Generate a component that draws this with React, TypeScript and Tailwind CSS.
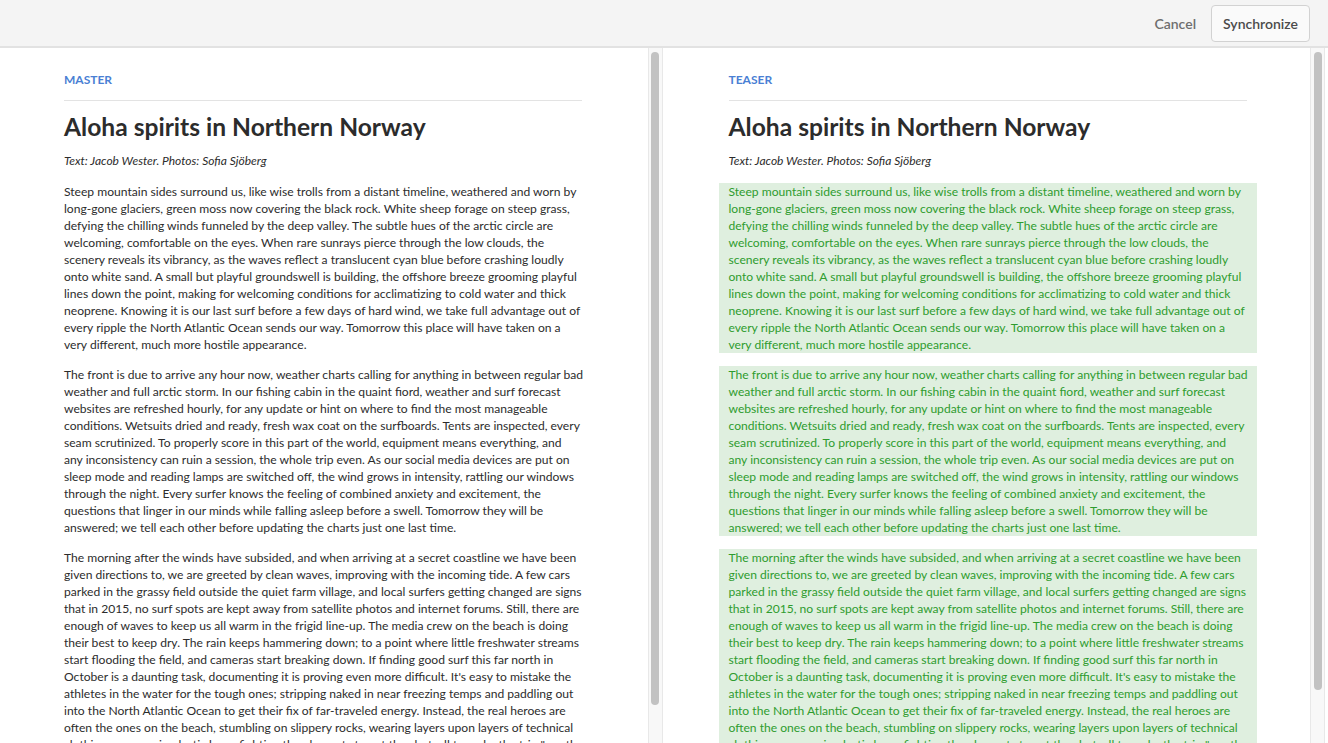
const paragraphs: string[][] = [
  [
    'Steep mountain sides surround us, like wise trolls from a distant timeline, weathered and worn by',
    'long-gone glaciers, green moss now covering the black rock. White sheep forage on steep grass,',
    'defying the chilling winds funneled by the deep valley. The subtle hues of the arctic circle are',
    'welcoming, comfortable on the eyes. When rare sunrays pierce through the low clouds, the',
    'scenery reveals its vibrancy, as the waves reflect a translucent cyan blue before crashing loudly',
    'onto white sand. A small but playful groundswell is building, the offshore breeze grooming playful',
    'lines down the point, making for welcoming conditions for acclimatizing to cold water and thick',
    'neoprene. Knowing it is our last surf before a few days of hard wind, we take full advantage out of',
    'every ripple the North Atlantic Ocean sends our way. Tomorrow this place will have taken on a',
    'very different, much more hostile appearance.',
  ],
  [
    'The front is due to arrive any hour now, weather charts calling for anything in between regular bad',
    'weather and full arctic storm. In our fishing cabin in the quaint fiord, weather and surf forecast',
    'websites are refreshed hourly, for any update or hint on where to find the most manageable',
    'conditions. Wetsuits dried and ready, fresh wax coat on the surfboards. Tents are inspected, every',
    'seam scrutinized. To properly score in this part of the world, equipment means everything, and',
    'any inconsistency can ruin a session, the whole trip even. As our social media devices are put on',
    'sleep mode and reading lamps are switched off, the wind grows in intensity, rattling our windows',
    'through the night. Every surfer knows the feeling of combined anxiety and excitement, the',
    'questions that linger in our minds while falling asleep before a swell. Tomorrow they will be',
    'answered; we tell each other before updating the charts just one last time.',
  ],
  [
    'The morning after the winds have subsided, and when arriving at a secret coastline we have been',
    'given directions to, we are greeted by clean waves, improving with the incoming tide. A few cars',
    'parked in the grassy field outside the quiet farm village, and local surfers getting changed are signs',
    'that in 2015, no surf spots are kept away from satellite photos and internet forums. Still, there are',
    'enough of waves to keep us all warm in the frigid line-up. The media crew on the beach is doing',
    'their best to keep dry. The rain keeps hammering down; to a point where little freshwater streams',
    'start flooding the field, and cameras start breaking down. If finding good surf this far north in',
    "October is a daunting task, documenting it is proving even more difficult. It's easy to mistake the",
    'athletes in the water for the tough ones; stripping naked in near freezing temps and paddling out',
    'into the North Atlantic Ocean to get their fix of far-traveled energy. Instead, the real heroes are',
    'often the ones on the beach, stumbling on slippery rocks, wearing layers upon layers of technical',
    'clothing, cameras in plastic bags, fighting the elements to get the shot, all to make the trip "worth',
    'it".',
  ],
]

interface PaneProps {
  label: string
  highlight?: boolean
  padLeft: string
  thumbEnd: string
}

function Pane({ label, highlight, padLeft, thumbEnd }: PaneProps) {
  return (
    <div className="flex flex-1 min-w-0 h-full">
      <div className={`flex-1 min-w-0 overflow-hidden pt-[24px] ${padLeft}`}>
        <div className="w-[518px]">
          <div className="text-[12px] leading-[16px] font-bold text-[#4a7fd4] pb-[12px] border-b border-[#e3e3e3]">
            {label}
          </div>
          <h1 className="mt-[10px] text-[24.6px] leading-[32px] font-bold text-[#2c2c2c]">
            Aloha spirits in Northern Norway
          </h1>
          <p className="mt-[9px] text-[12px] leading-[17px] italic text-[#2c2c2c]">
            Text: Jacob Wester. Photos: Sofia Sjöberg
          </p>
          <div className="mt-[14px] flex flex-col gap-[13px]">
            {paragraphs.map((lines, i) => (
              <p
                key={i}
                className={`-mx-[10px] px-[10px] text-[12.1px] leading-[17px] ${
                  highlight ? 'bg-[#dfefdf] text-[#2e9c2e]' : 'text-[#2c2c2c]'
                }`}
              >
                {lines.map((line, j) => (
                  <span key={j} className="block whitespace-nowrap">
                    {line}
                  </span>
                ))}
              </p>
            ))}
          </div>
        </div>
      </div>
      <div className="w-[15px] shrink-0 h-full bg-[#f8f8f8] border-x border-[#e8e8e8] pt-[4px] flex justify-center">
        <div className={`w-[8px] ${thumbEnd} bg-[#c2c2c2] rounded-full`} />
      </div>
    </div>
  )
}

export default function App() {
  return (
    <div className="h-[743px] w-[1328px] flex flex-col overflow-hidden bg-white" style={{ fontFamily: 'Lato, "Open Sans", sans-serif' }}>
      <div className="h-[48px] shrink-0 bg-[#f4f4f4] border-b-2 border-[#e2e2e2] flex items-center justify-end pr-[18px] gap-[11px]">
        <button className="text-[14px] font-semibold text-[#6e6e6e] px-[4px]">Cancel</button>
        <button className="h-[37px] px-[11px] rounded-[4px] border border-[#d2d2d2] bg-[#fafafa] text-[14px] font-semibold text-[#4b4b4b]">
          Synchronize
        </button>
      </div>
      <div className="flex-1 min-h-0 flex pr-[3px]">
        <Pane label="MASTER" padLeft="pl-[64px]" thumbEnd="h-[653px]" />
        <Pane label="TEASER" highlight padLeft="pl-[66px]" thumbEnd="h-[638px]" />
      </div>
    </div>
  )
}
